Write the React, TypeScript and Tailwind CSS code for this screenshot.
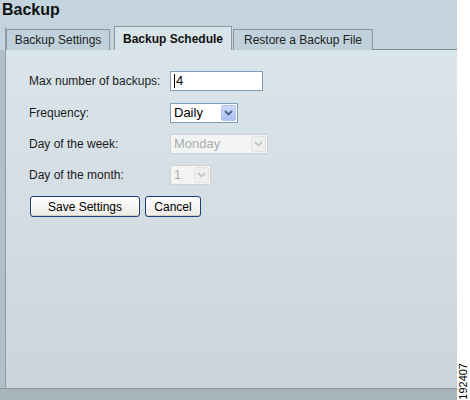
import React from "react";

function Chevron({ color }: { color: string }) {
  return (
    <svg width="9" height="6" viewBox="0 0 9 6">
      <path d="M1 1 L4.5 4.5 L8 1" fill="none" stroke={color} strokeWidth="1.8" />
    </svg>
  );
}

function Select({ value, width, disabled }: { value: string; width: string; disabled?: boolean }) {
  return (
    <div
      className={`flex h-[20px] ${width} items-stretch border ${
        disabled ? "border-[#cfd3d6] bg-[#f3f4f4]" : "border-[#7f9db9] bg-white"
      }`}
    >
      <div
        className={`flex-1 pl-[3px] text-[13px] leading-[18px] ${
          disabled ? "text-[#a9adb0]" : "text-black"
        }`}
      >
        {value}
      </div>
      <div
        className={`m-px flex w-[15px] items-center justify-center rounded-[2px] ${
          disabled
            ? "border border-[#e0e3e5] bg-[#eef0f1]"
            : "border border-[#b3c6f3] bg-gradient-to-b from-[#cfdcfb] to-[#a9c0f2]"
        }`}
      >
        <Chevron color={disabled ? "#c5c9cc" : "#4d6185"} />
      </div>
    </div>
  );
}

function Row({ label, children, top }: { label: string; children: React.ReactNode; top: string }) {
  return (
    <div className={`flex items-center ${top}`}>
      <div className="w-[141px] text-[12px] text-[#1c1c1c]">{label}</div>
      {children}
    </div>
  );
}

export default function App() {
  return (
    <div className="flex h-[400px] w-[470px] overflow-hidden bg-white font-['Liberation_Sans',Arial,sans-serif]">
      <div className="flex w-[457px] flex-col bg-[#c3d4de]">
        <h1 className="h-[27px] pl-[2px] text-[16px] font-bold leading-[20px] text-[#111]">Backup</h1>

        <div className="flex flex-1 flex-col">
          <div className="flex h-[23px] items-end">
            <div className="h-full w-[6px] border-r border-[#8e9ea9]" />
            <div className="flex h-[21px] w-[104px] items-center justify-center border border-b-0 border-[#8797a3] bg-[#c0d1db] text-[12px] text-[#222]">
              Backup Settings
            </div>
            <div className="ml-[4px] flex h-[24px] w-[118px] items-center justify-center border border-b-0 border-[#8797a3] bg-[#d9e4ea] text-[12px] font-bold text-[#111]">
              Backup Schedule
            </div>
            <div className="ml-[1px] flex h-[21px] w-[140px] items-center justify-center border border-b-0 border-[#8797a3] bg-[#c0d1db] text-[12px] text-[#222]">
              Restore a Backup File
            </div>
            <div className="flex-1 self-end border-b border-[#7d8d98]" />
          </div>

          <div className="flex flex-1">
            <div className="w-[6px] border-r border-[#8e9ea9] bg-[#b2bfc8]" />
            <div className="flex-1 bg-gradient-to-b from-[#dae5eb] via-[#d3dde3] to-[#ccd4db] pl-[23px] pt-[21px]">
              <Row label="Max number of backups:" top="">
                <div className="flex h-[20px] w-[93px] items-center border border-[#7f9db9] bg-white pl-[3px]">
                  <span className="mr-px h-[14px] w-px bg-black" />
                  <span className="text-[13px] leading-[18px]">4</span>
                </div>
              </Row>
              <Row label="Frequency:" top="mt-[12px]">
                <Select value="Daily" width="w-[68px]" />
              </Row>
              <Row label="Day of the week:" top="mt-[11px]">
                <Select value="Monday" width="w-[98px]" disabled />
              </Row>
              <Row label="Day of the month:" top="mt-[11px]">
                <Select value="1" width="w-[41px]" disabled />
              </Row>
              <div className="mt-[11px] flex gap-[5px] pl-px">
                <button className="h-[21px] w-[110px] rounded-[3px] border border-[#1c3f7a] bg-gradient-to-b from-white to-[#ecebe6] text-[12px] text-black shadow-[inset_0_-1px_0_#d6d0c5]">
                  Save Settings
                </button>
                <button className="h-[21px] w-[56px] rounded-[3px] border border-[#1c3f7a] bg-gradient-to-b from-white to-[#ecebe6] text-[12px] text-black shadow-[inset_0_-1px_0_#d6d0c5]">
                  Cancel
                </button>
              </div>
            </div>
          </div>
          <div className="h-[12px] border-t border-[#8a98a2] bg-[#a8b4bc]" />
        </div>
      </div>
      <div className="relative flex-1">
        <div className="absolute bottom-0 left-[2px] rotate-180 text-[11px] leading-[9px] text-black [writing-mode:vertical-rl]">
          192407
        </div>
      </div>
    </div>
  );
}
